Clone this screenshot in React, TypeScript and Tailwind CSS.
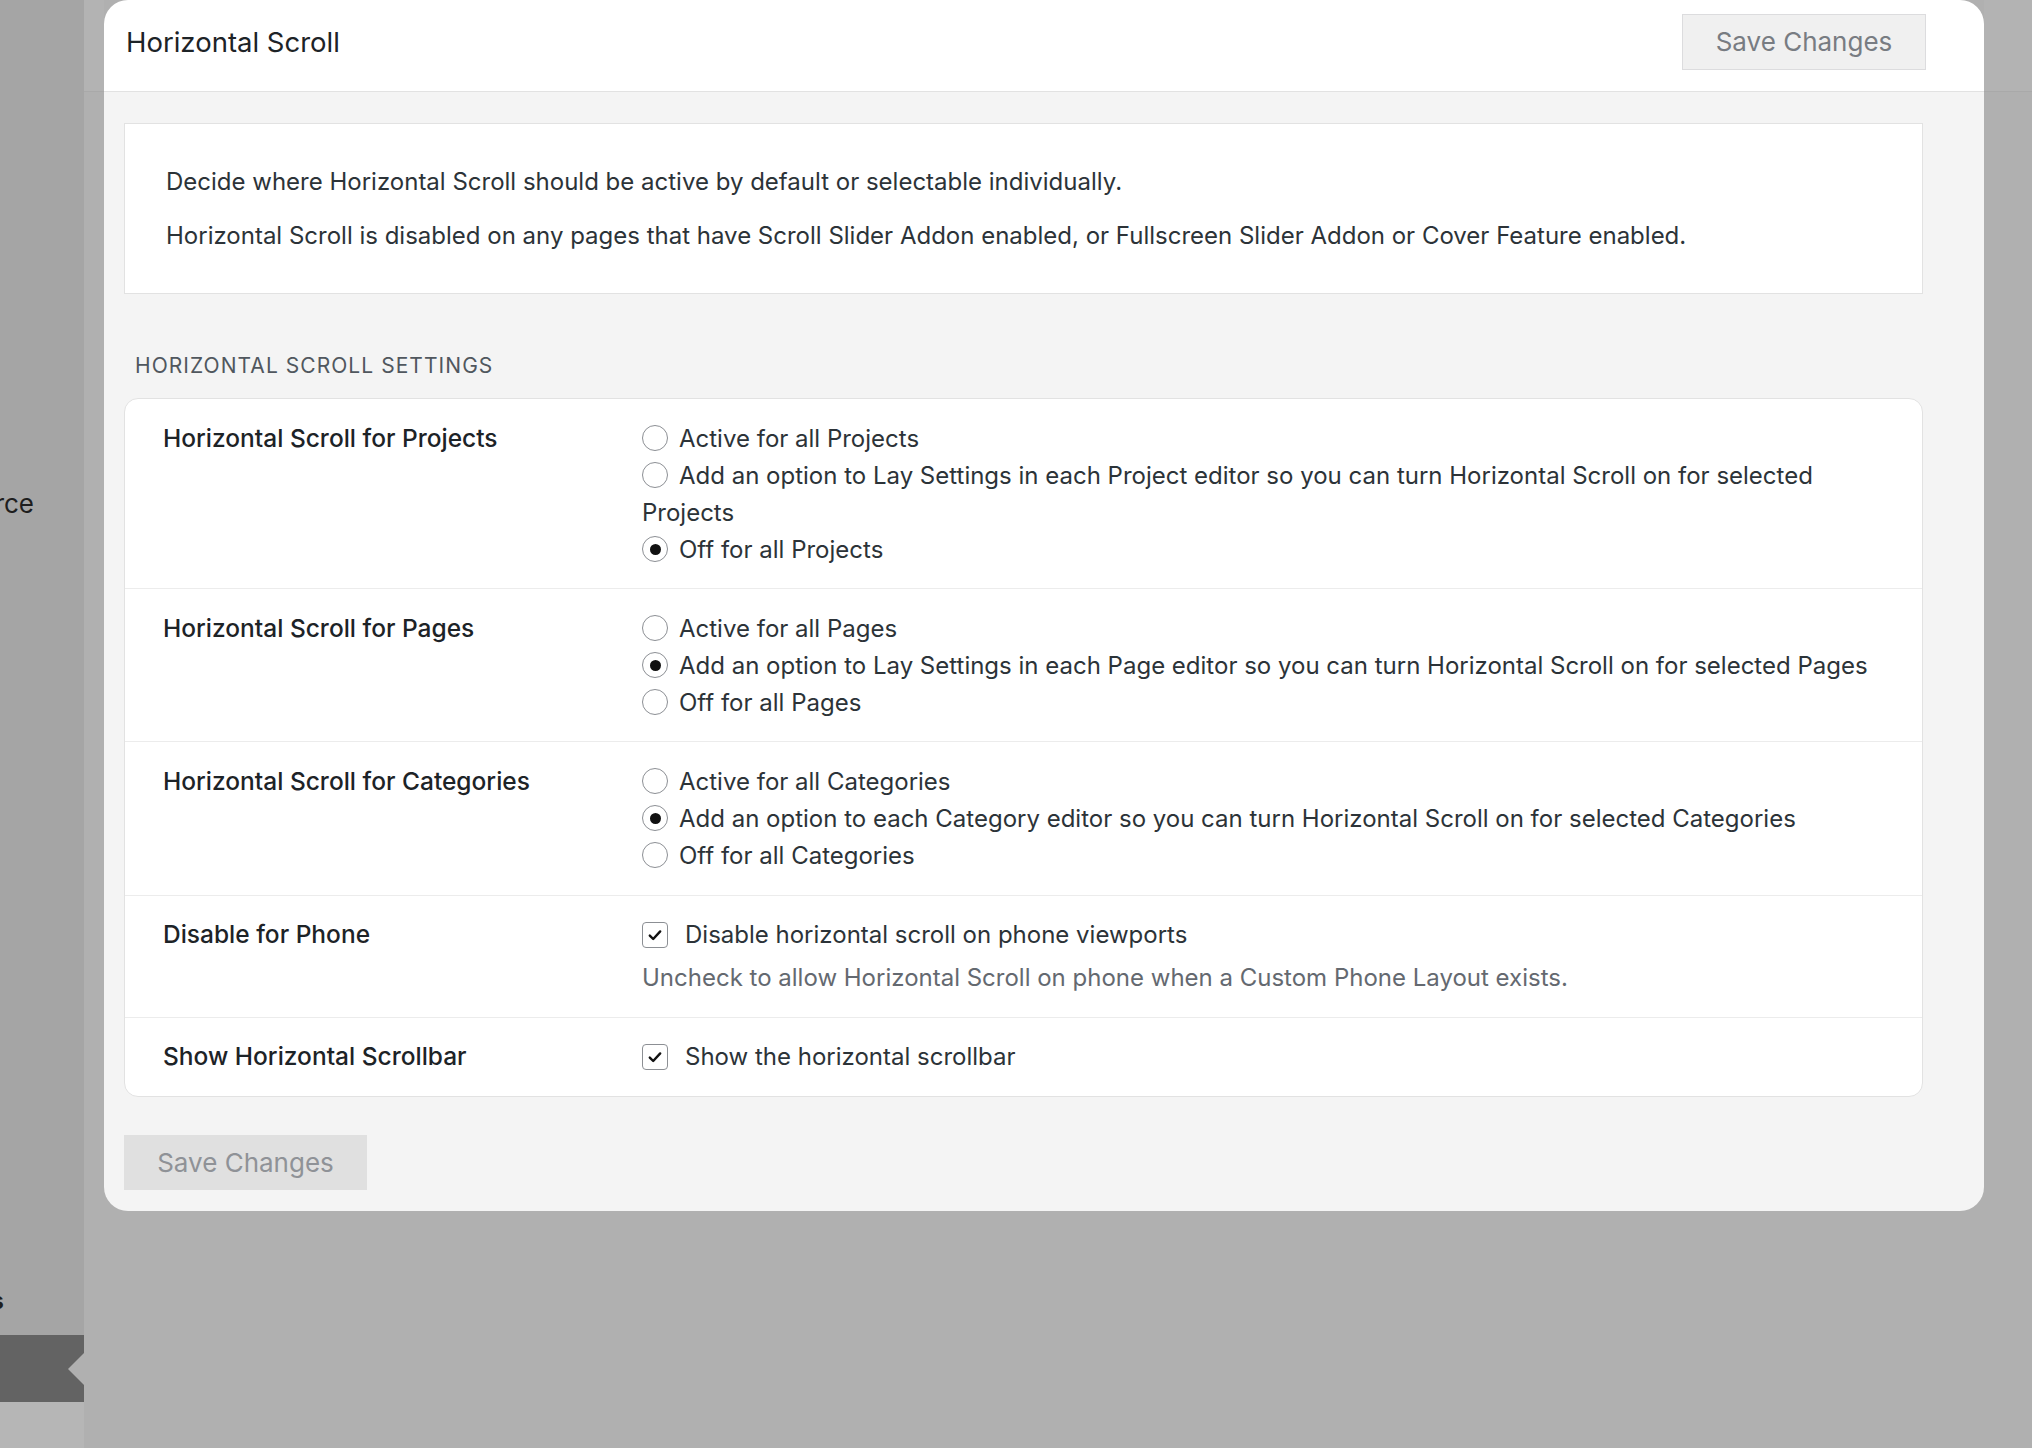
import React from "react";

const font = { fontFamily: 'Inter, "Noto Sans", "Liberation Sans", sans-serif' };

function Radio({ checked }: { checked?: boolean }) {
  return (
    <span className="relative inline-flex items-center justify-center w-[26px] h-[26px] rounded-full border-[1.5px] border-[#8c8f94] bg-white align-middle mr-[11px] -mt-[4px]">
      {checked && <span className="w-[11px] h-[11px] rounded-full bg-[#111]" />}
    </span>
  );
}

function Checkbox() {
  return (
    <span className="inline-flex items-center justify-center w-[26px] h-[26px] rounded-[4px] border-[1.5px] border-[#8c8f94] bg-white align-middle mr-[17px] -mt-[4px]">
      <svg width="16" height="16" viewBox="0 0 16 16" fill="none">
        <path d="M2.8 8.6l3.4 3.4 7-7.6" stroke="#111" strokeWidth="2.4" strokeLinecap="round" strokeLinejoin="round" />
      </svg>
    </span>
  );
}

function Row({
  label,
  children,
  last,
}: {
  label: string;
  children: React.ReactNode;
  last?: boolean;
}) {
  return (
    <div className={`flex py-[20.6px] ${last ? "" : "border-b-[1.5px] border-[#ececec]"}`}>
      <div className="w-[517px] pl-[38px] shrink-0 text-[24.5px] leading-[37px] font-medium text-[#1d2327]">
        {label}
      </div>
      <div className="flex-1 pr-[38px] text-[24px] leading-[37px] text-[#2c3338]">{children}</div>
    </div>
  );
}

function RadioGroup({ options, selected }: { options: string[]; selected: number }) {
  return (
    <div>
      {options.map((o, i) => (
        <label key={i} className="block">
          <Radio checked={i === selected} />
          {o}
        </label>
      ))}
    </div>
  );
}

export default function App() {
  return (
    <div className="flex w-[2032px] h-[1448px] overflow-hidden bg-[#b0b0b0]" style={font}>
      {/* dimmed admin sidebar */}
      <div className="w-[84px] shrink-0 flex flex-col bg-[#a5a5a5]">
        <div className="h-[486px]" />
        <div className="h-[36px] overflow-hidden flex justify-end pr-[50px] whitespace-nowrap text-[26px] leading-[36px] text-[#1e1e1e]">
          WooCommerce
        </div>
        <div className="h-[764px]" />
        <div className="h-[30px] overflow-hidden flex justify-end pr-[80px] whitespace-nowrap text-[24px] leading-[30px] font-semibold text-[#1e1e1e]">
          Settings
        </div>
        <div className="h-[19px]" />
        <div className="relative h-[67px] bg-[#636363]">
          <span className="absolute right-0 top-[18px] w-0 h-0 border-y-[16px] border-y-transparent border-r-[16px] border-r-[#b0b0b0]" />
        </div>
        <div className="flex-1 bg-[#b6b6b6]" />
      </div>

      {/* overlay area */}
      <div className="flex-1 flex flex-col">
        <div className="flex">
          <div className="w-[20px] h-[92px] bg-[#b3b3b3] border-b-[1.5px] border-[#a9a9a9]" />
          <div className="w-[1880px] bg-white rounded-t-[24px] h-[92px] border-b-[1.5px] border-[#e2e2e2] flex items-center justify-between pl-[22px] pr-[58px]">
            <div className="text-[27.5px] text-[#1d2327] -mt-[6px]">Horizontal Scroll</div>
            <button className="h-[56px] w-[244px] -mt-[8px] bg-[#f0f0f0] border-[1.5px] border-[#dcdcde] text-[26px] text-[#787c82]">
              Save Changes
            </button>
          </div>
          <div className="flex-1 h-[92px] bg-[#b3b3b3] border-b-[1.5px] border-[#a9a9a9]" />
        </div>
        <div className="ml-[20px] w-[1880px] bg-[#f4f4f4] rounded-b-[24px] pl-[20px] pr-[61px] pt-[31px] pb-[21px]">
          <div className="bg-white border-[1.5px] border-[#e2e2e2] px-[41px] pt-[43px] pb-[42px] flex flex-col gap-[24px] text-[24px] leading-[30px] text-[#2c3338]">
            <p>Decide where Horizontal Scroll should be active by default or selectable individually.</p>
            <p>
              Horizontal Scroll is disabled on any pages that have Scroll Slider Addon enabled, or Fullscreen
              Slider Addon or Cover Feature enabled.
            </p>
          </div>

          <h2 className="mt-[58px] mb-[18px] pl-[11px] text-[21px] leading-[28px] uppercase tracking-[0.05em] text-[#50575e]">
            Horizontal Scroll Settings
          </h2>

          <div className="bg-white border-[1.5px] border-[#e2e2e2] rounded-[14px]">
            <Row label="Horizontal Scroll for Projects">
              <RadioGroup
                selected={2}
                options={[
                  "Active for all Projects",
                  "Add an option to Lay Settings in each Project editor so you can turn Horizontal Scroll on for selected Projects",
                  "Off for all Projects",
                ]}
              />
            </Row>
            <Row label="Horizontal Scroll for Pages">
              <RadioGroup
                selected={1}
                options={[
                  "Active for all Pages",
                  "Add an option to Lay Settings in each Page editor so you can turn Horizontal Scroll on for selected Pages",
                  "Off for all Pages",
                ]}
              />
            </Row>
            <Row label="Horizontal Scroll for Categories">
              <RadioGroup
                selected={1}
                options={[
                  "Active for all Categories",
                  "Add an option to each Category editor so you can turn Horizontal Scroll on for selected Categories",
                  "Off for all Categories",
                ]}
              />
            </Row>
            <Row label="Disable for Phone">
              <label className="block">
                <Checkbox />
                Disable horizontal scroll on phone viewports
              </label>
              <p className="mt-[6px] text-[#646970]">
                Uncheck to allow Horizontal Scroll on phone when a Custom Phone Layout exists.
              </p>
            </Row>
            <Row label="Show Horizontal Scrollbar" last>
              <label className="block">
                <Checkbox />
                Show the horizontal scrollbar
              </label>
            </Row>
          </div>

          <button className="mt-[38px] h-[55px] w-[243px] bg-[#e0e0e0] text-[26px] text-[#8f9297]">Save Changes</button>
        </div>
      </div>
    </div>
  );
}
